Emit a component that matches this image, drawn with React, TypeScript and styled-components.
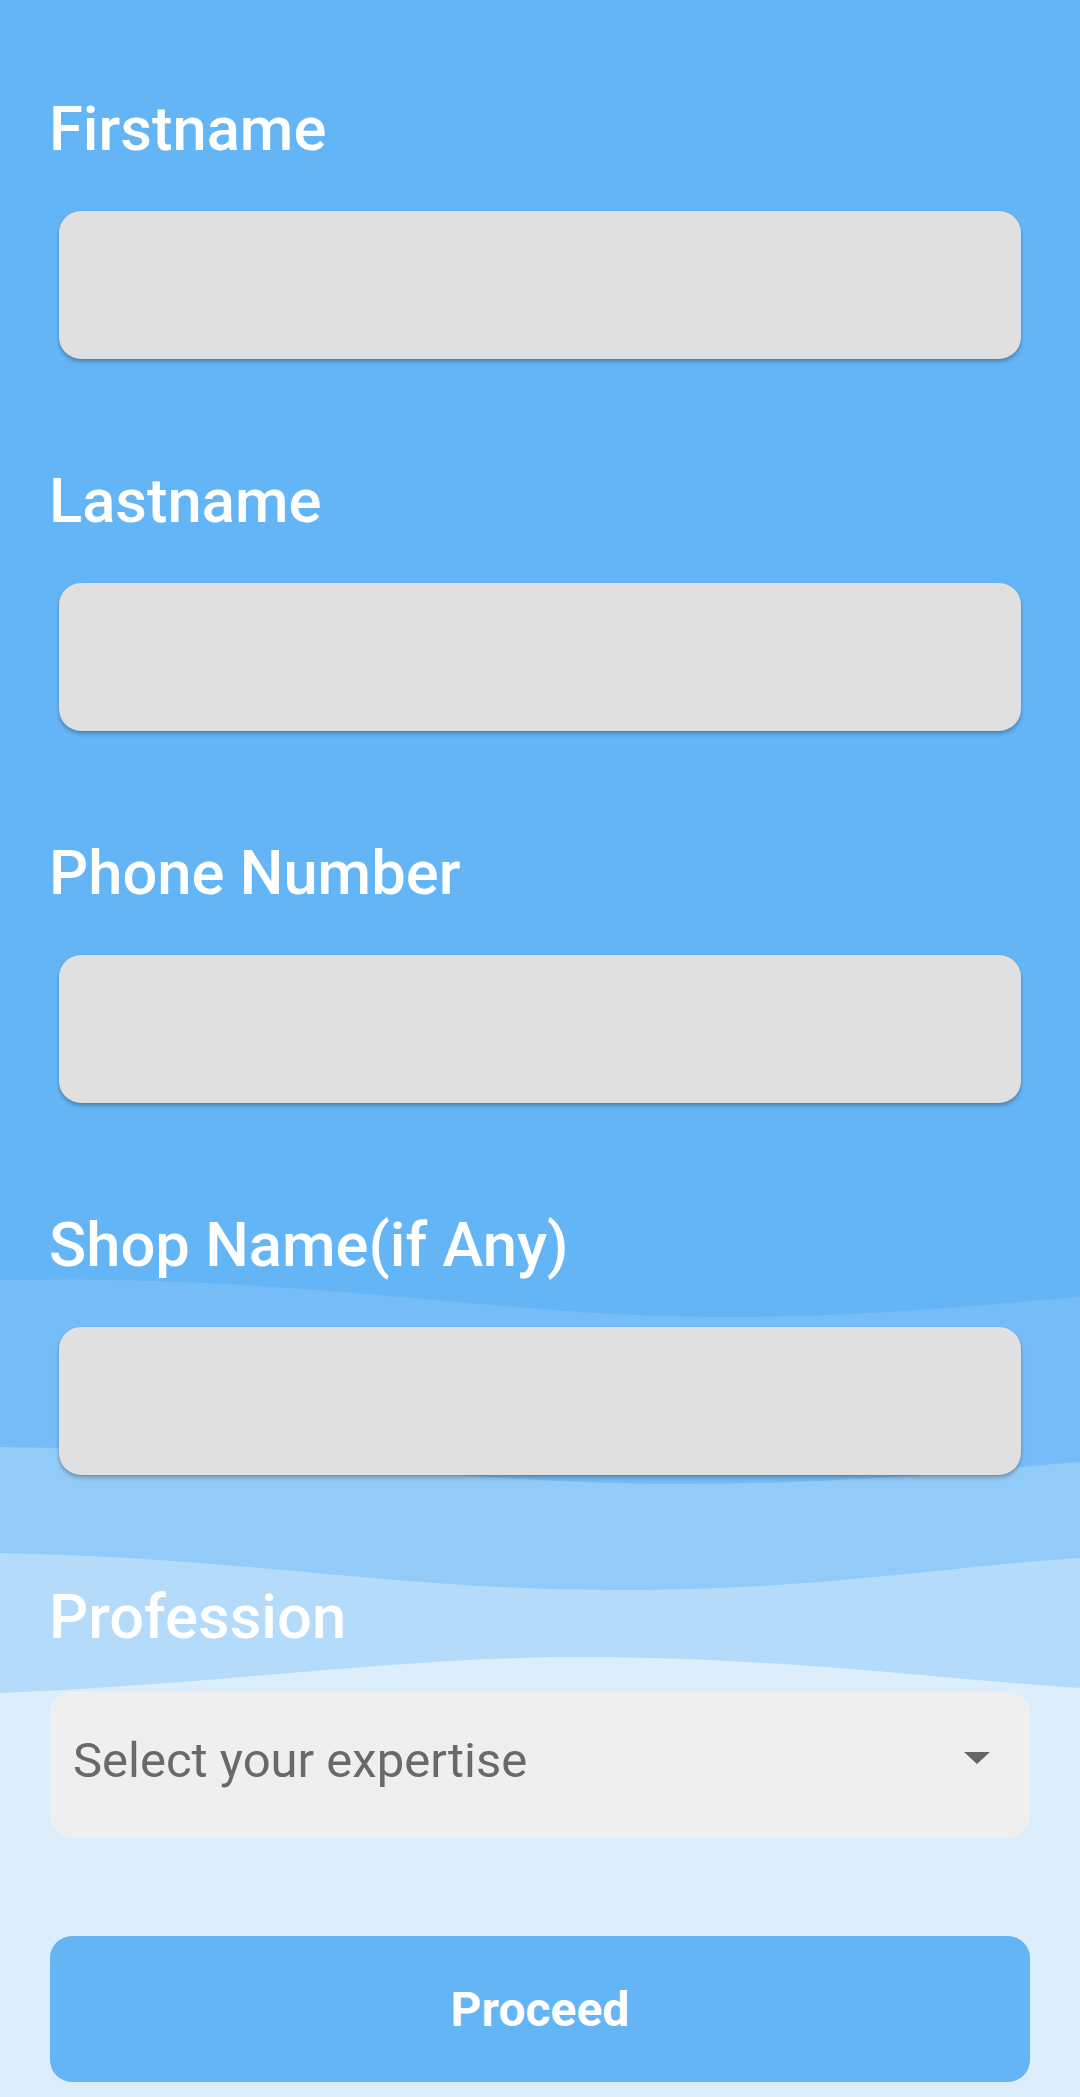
import React from "react";
import styled, { createGlobalStyle } from "styled-components";

const GlobalStyle = createGlobalStyle`
  html, body {
    margin: 0;
    padding: 0;
    background: #dceefc;
  }
  * { box-sizing: border-box; }
`;

const Page = styled.div`
  position: relative;
  width: 1080px;
  min-height: 2097px;
  background: #64b5f6;
  overflow: hidden;
  font-family: Roboto, "Noto Sans", sans-serif;
`;

const Waves = styled.svg`
  position: absolute;
  left: 0;
  top: 0;
  width: 1080px;
  height: 2097px;
  z-index: 0;
`;

const Form = styled.div`
  position: relative;
  z-index: 1;
  display: flex;
  flex-direction: column;
  padding: 94px 50px 0 50px;
`;

const Field = styled.div`
  display: flex;
  flex-direction: column;
  margin-bottom: 107px;
`;

const Label = styled.div<{ $gap?: number }>`
  font-size: 61.5px;
  font-weight: 500;
  color: #ffffff;
  line-height: 70px;
  height: 70px;
  margin-left: -1px;
  margin-bottom: ${(p) => p.$gap ?? 47}px;
  white-space: nowrap;
`;

const InputBox = styled.div`
  height: 148px;
  margin: 0 9px;
  background: #e0e0e0;
  border-radius: 22px;
  box-shadow: 0 3px 4px rgba(0, 0, 0, 0.22), 0 1px 2px rgba(0, 0, 0, 0.12);
`;

const Select = styled.div`
  height: 146px;
  background: #efefef;
  border-radius: 22px;
  display: flex;
  align-items: center;
  justify-content: space-between;
  padding: 0 40px 0 23px;
`;

const SelectText = styled.span`
  font-size: 49px;
  color: #696969;
  font-weight: 400;
  margin-top: -10px;
`;

const Arrow = styled.svg`
  width: 26px;
  height: 12px;
  margin-top: -14px;
`;

const Button = styled.button`
  margin-top: 98px;
  height: 146px;
  border: none;
  border-radius: 22px;
  background: #64b5f6;
  color: #ffffff;
  font-family: Roboto, "Noto Sans", sans-serif;
  font-size: 48px;
  font-weight: 700;
  display: flex;
  align-items: center;
  justify-content: center;
  padding: 0;
`;

const fields = ["Firstname", "Lastname", "Phone Number", "Shop Name(if Any)"];

export default function App() {
  return (
    <>
      <GlobalStyle />
      <Page>
        <Waves viewBox="0 0 1080 2097" preserveAspectRatio="none">
          <path
            d="M0 1280 C 300 1274, 500 1317, 720 1317 C 880 1317, 1000 1303, 1080 1297 L1080 2097 L0 2097 Z"
            fill="#76bdf7"
          />
          <path
            d="M0 1447 C 250 1449, 450 1484, 680 1484 C 850 1484, 980 1470, 1080 1462 L1080 2097 L0 2097 Z"
            fill="#93cbf8"
          />
          <path
            d="M0 1553 C 250 1558, 400 1590, 620 1590 C 820 1590, 950 1566, 1080 1558 L1080 2097 L0 2097 Z"
            fill="#b4dbfa"
          />
          <path
            d="M0 1693 C 200 1686, 400 1657, 580 1657 C 780 1657, 950 1680, 1080 1688 L1080 2097 L0 2097 Z"
            fill="#dceefc"
          />
        </Waves>
        <Form>
          {fields.map((f) => (
            <Field key={f}>
              <Label>{f}</Label>
              <InputBox />
            </Field>
          ))}
          <Label $gap={40}>Profession</Label>
          <Select>
            <SelectText>Select your expertise</SelectText>
            <Arrow viewBox="0 0 26 12">
              <path d="M0 0 L26 0 L13 12 Z" fill="#666666" />
            </Arrow>
          </Select>
          <Button>Proceed</Button>
        </Form>
      </Page>
    </>
  );
}
